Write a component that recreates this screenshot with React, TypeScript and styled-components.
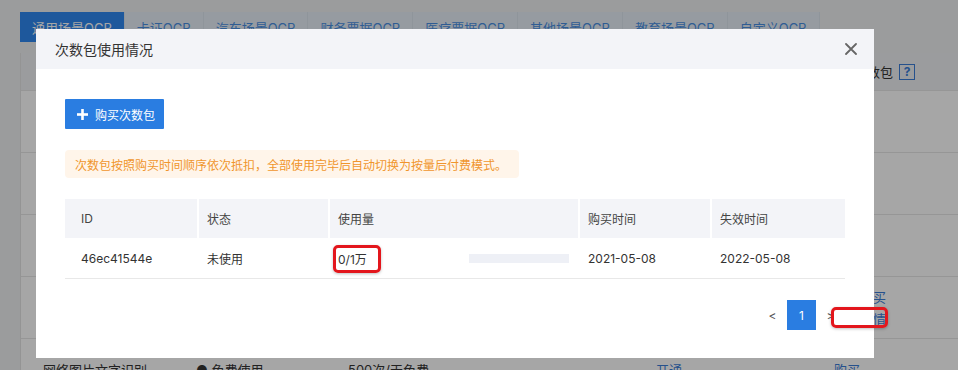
import React from "react";
import styled, { createGlobalStyle } from "styled-components";

const GlobalStyle = createGlobalStyle`
  html, body { margin: 0; padding: 0; }
  body {
    font-family: "Inter", "Noto Sans CJK SC", sans-serif;
    background: #f2f3f5;
    -webkit-font-smoothing: antialiased;
  }
  * { box-sizing: border-box; }
`;

const Page = styled.div`
  position: relative;
  width: 958px;
  height: 370px;
  overflow: hidden;
  padding: 12px 0 0 20px;
  background: #eef0f2;
`;

const Tabs = styled.div`
  display: flex;
  height: 30px;
`;

const Tab = styled.div<{ $active?: boolean }>`
  padding: 0 12px;
  line-height: 32px;
  font-size: 13px;
  white-space: nowrap;
  border-right: 1px solid #dce5ef;
  background: ${(p) => (p.$active ? "#2e87f0" : "#e6eef8")};
  color: ${(p) => (p.$active ? "#ffffff" : "#4a90e2")};
`;

const BgTable = styled.div`
  margin-top: 11px;
  background: #fff;
  border-left: 1px solid #e3e3e3;
`;

const BgHeader = styled.div`
  height: 37px;
  background: #eef0f3;
  display: flex;
  align-items: center;
  justify-content: flex-end;
  padding-right: 43px;
  font-size: 13px;
  color: #333;
  gap: 6px;
`;

const HelpBox = styled.span`
  width: 16px;
  height: 16px;
  border: 1px solid #3b7dd8;
  color: #3b7dd8;
  font-size: 12px;
  font-weight: 700;
  display: inline-flex;
  align-items: center;
  justify-content: center;
`;

const BgRow = styled.div`
  height: 62px;
  border-top: 1px solid #e6e6e6;
  display: grid;
  grid-template-columns: 153px 152px 153px 155px 178px 1fr;
  align-items: center;
  padding-left: 22px;
  font-size: 13px;
  color: #333;
`;

const BgCell = styled.div<{ $link?: boolean }>`
  display: flex;
  flex-direction: column;
  gap: 3px;
  white-space: nowrap;
  color: ${(p) => (p.$link ? "#3b7dd8" : "#333")};
`;

const Overlay = styled.div`
  position: absolute;
  inset: 0;
  background: rgba(0, 0, 0, 0.35);
`;

const Modal = styled.div`
  position: absolute;
  left: 36px;
  top: 29px;
  width: 838px;
  height: 329px;
  background: #fff;
  display: flex;
  flex-direction: column;
`;

const ModalHeader = styled.div`
  height: 40px;
  flex: none;
  background: #f3f4f8;
  display: flex;
  align-items: center;
  justify-content: space-between;
  padding: 0 15px 0 19px;
`;

const Title = styled.h2`
  margin: 0;
  font-size: 14px;
  font-weight: 400;
  color: #333;
`;

const CloseButton = styled.button`
  border: 0;
  background: none;
  padding: 0;
  width: 16px;
  height: 16px;
  display: flex;
  align-items: center;
  justify-content: center;
`;

const ModalBody = styled.div`
  padding: 30px 29px 0;
  display: flex;
  flex-direction: column;
  align-items: flex-start;
`;

const PrimaryButton = styled.button`
  height: 30px;
  width: 99px;
  background: #2a7de1;
  color: #fff;
  border: 0;
  border-radius: 1px;
  font-family: inherit;
  font-size: 12px;
  display: flex;
  align-items: center;
  padding: 0 0 0 12px;
  gap: 7px;
`;

const Notice = styled.div`
  margin-top: 21px;
  height: 28px;
  padding: 0 12px 0 10px;
  background: #fff5ea;
  color: #f0952d;
  font-size: 12px;
  display: flex;
  align-items: center;
  border-radius: 4px;
`;

const Table = styled.div`
  margin-top: 21px;
  width: 780px;
  font-size: 12px;
  color: #333;
`;

const HeadRow = styled.div`
  display: grid;
  grid-template-columns: 132px 131px 250px 132px 135px;
  height: 39px;
  background: #f3f4f8;
`;

const HeadCell = styled.div<{ $first?: boolean }>`
  display: flex;
  align-items: center;
  padding-left: ${(p) => (p.$first ? "16px" : "8px")};
  border-left: ${(p) => (p.$first ? "0" : "2px solid #fff")};
  color: #444;
`;

const BodyRow = styled.div`
  display: grid;
  grid-template-columns: 132px 131px 250px 132px 135px;
  height: 41px;
  border-bottom: 1px solid #e8e8e8;
`;

const BodyCell = styled.div<{ $first?: boolean }>`
  position: relative;
  display: flex;
  align-items: center;
  padding-left: ${(p) => (p.$first ? "16px" : "10px")};
  padding-right: 9px;
`;

const Progress = styled.div`
  margin-left: auto;
  width: 100px;
  height: 9px;
  background: #eef0f6;
`;

const Mark = styled.div`
  position: absolute;
  border: 3px solid #e3161c;
  border-radius: 5px;
  box-shadow: 0 1px 3px rgba(0, 0, 0, 0.25);
  pointer-events: none;
`;

const CellMark = styled(Mark)`
  left: 5px;
  top: 7px;
  width: 48px;
  height: 28px;
`;

const PageMark = styled(Mark)`
  left: 831px;
  top: 307px;
  width: 57px;
  height: 21px;
`;

const Pagination = styled.div`
  margin-top: 21px;
  width: 780px;
  display: flex;
  justify-content: flex-end;
  align-items: center;
`;

const PageArrow = styled.button`
  width: 29px;
  height: 30px;
  border: 0;
  background: none;
  padding: 0;
  color: #555;
  font-family: inherit;
  font-size: 12px;
`;

const PageNum = styled.button`
  width: 29px;
  height: 30px;
  border: 0;
  padding: 0;
  background: #2a7de1;
  color: #fff;
  font-family: inherit;
  font-size: 12px;
`;

const PlusIcon = () => (
  <svg width="11" height="11" viewBox="0 0 11 11">
    <rect x="4.2" y="0" width="2.6" height="11" fill="#fff" />
    <rect x="0" y="4.2" width="11" height="2.6" fill="#fff" />
  </svg>
);

const CloseIcon = () => (
  <svg width="12" height="12" viewBox="0 0 12 12">
    <path d="M1 1 L11 11 M11 1 L1 11" stroke="#666" strokeWidth="1.8" strokeLinecap="round" />
  </svg>
);

const tabs = ["通用场景OCR", "卡证OCR", "汽车场景OCR", "财务票据OCR", "医疗票据OCR", "其他场景OCR", "教育场景OCR", "自定义OCR"];

const bgRows = [
  { name: "通用文字识别（标准版）", status: "● 免费使用", quota: "50000次/天免费", dash: "-", open: "开通", ops: ["开通"] },
  { name: "通用文字识别（含位置版）", status: "● 免费使用", quota: "500次/天免费", dash: "-", open: "开通", ops: ["开通"] },
  { name: "通用文字识别（高精度版）", status: "● 免费使用", quota: "500次/天免费", dash: "-", open: "开通", ops: ["开通"] },
  { name: "通用文字识别（高精度含位置版）", status: "● 免费使用", quota: "500次/天免费", dash: "-", open: "开通", ops: ["立即购买", "查看详情"] },
  { name: "网络图片文字识别", status: "● 免费使用", quota: "500次/天免费", dash: "-", open: "开通", ops: ["购买"] },
];

export default function App() {
  return (
    <>
      <GlobalStyle />
      <Page>
        <Tabs>
          {tabs.map((t, i) => (
            <Tab key={t} $active={i === 0}>
              {t}
            </Tab>
          ))}
        </Tabs>
        <BgTable>
          <BgHeader>
            <span>次数包</span>
            <HelpBox>?</HelpBox>
          </BgHeader>
          {bgRows.map((r, i) => (
            <BgRow key={i}>
              <BgCell>{r.name}</BgCell>
              <BgCell>{r.status}</BgCell>
              <BgCell>{r.quota}</BgCell>
              <BgCell>{r.dash}</BgCell>
              <BgCell $link>{r.open}</BgCell>
              <BgCell $link>
                {r.ops.map((o) => (
                  <span key={o}>{o}</span>
                ))}
              </BgCell>
            </BgRow>
          ))}
        </BgTable>

        <Overlay />

        <Modal>
          <ModalHeader>
            <Title>次数包使用情况</Title>
            <CloseButton aria-label="关闭">
              <CloseIcon />
            </CloseButton>
          </ModalHeader>
          <ModalBody>
            <PrimaryButton>
              <PlusIcon />
              购买次数包
            </PrimaryButton>
            <Notice>次数包按照购买时间顺序依次抵扣，全部使用完毕后自动切换为按量后付费模式。</Notice>
            <Table>
              <HeadRow>
                <HeadCell $first>ID</HeadCell>
                <HeadCell>状态</HeadCell>
                <HeadCell>使用量</HeadCell>
                <HeadCell>购买时间</HeadCell>
                <HeadCell>失效时间</HeadCell>
              </HeadRow>
              <BodyRow>
                <BodyCell $first>46ec41544e</BodyCell>
                <BodyCell>未使用</BodyCell>
                <BodyCell>
                  0/1万
                  <Progress />
                  <CellMark />
                </BodyCell>
                <BodyCell>2021-05-08</BodyCell>
                <BodyCell>2022-05-08</BodyCell>
              </BodyRow>
            </Table>
            <Pagination>
              <PageArrow>&lt;</PageArrow>
              <PageNum>1</PageNum>
              <PageArrow>&gt;</PageArrow>
            </Pagination>
          </ModalBody>
        </Modal>

        <PageMark />
      </Page>
    </>
  );
}
